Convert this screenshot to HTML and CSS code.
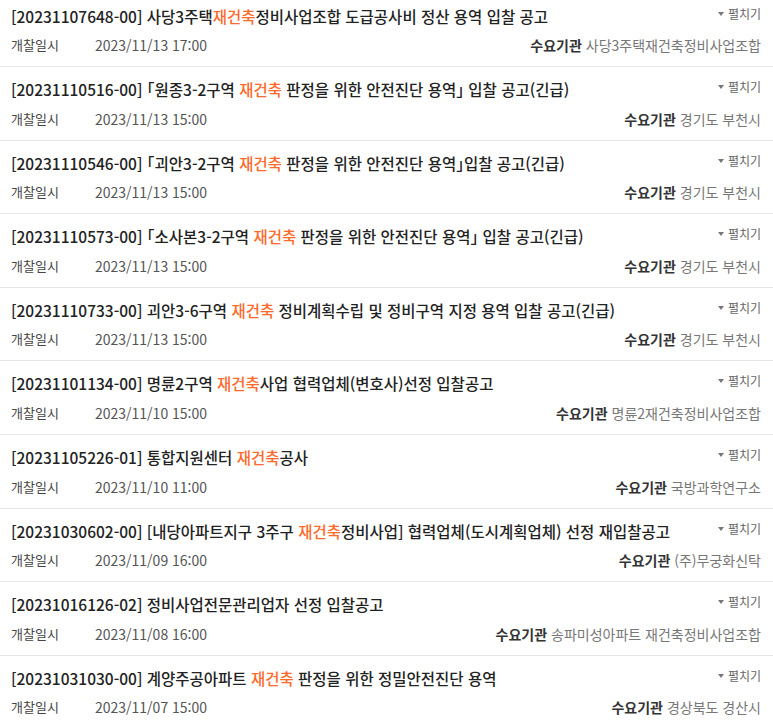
FILE: index.html
```html
<!DOCTYPE html>
<html lang="ko">
<head>
<meta charset="utf-8">
<title>입찰 공고</title>
<link rel="stylesheet" href="styles.css">
</head>
<body>
<ul class="list">
  <li class="item">
    <div class="head"><p class="title">[20231107648-00] 사당3주택<em>재건축</em>정비사업조합 도급공사비 정산 용역 입찰 공고</p><span class="toggle"><i class="tri"></i>펼치기</span></div>
    <div class="meta"><span class="label">개찰일시</span><span class="date">2023/11/13 17:00</span><span class="org"><b>수요기관</b> 사당3주택재건축정비사업조합</span></div>
  </li>
  <li class="item">
    <div class="head"><p class="title">[20231110516-00] <span class="br">「</span>원종3-2구역 <em>재건축</em> 판정을 위한 안전진단 용역<span class="br">」</span> 입찰 공고(긴급)</p><span class="toggle"><i class="tri"></i>펼치기</span></div>
    <div class="meta"><span class="label">개찰일시</span><span class="date">2023/11/13 15:00</span><span class="org"><b>수요기관</b> 경기도 부천시</span></div>
  </li>
  <li class="item">
    <div class="head"><p class="title">[20231110546-00] <span class="br">「</span>괴안3-2구역 <em>재건축</em> 판정을 위한 안전진단 용역<span class="br">」</span>입찰 공고(긴급)</p><span class="toggle"><i class="tri"></i>펼치기</span></div>
    <div class="meta"><span class="label">개찰일시</span><span class="date">2023/11/13 15:00</span><span class="org"><b>수요기관</b> 경기도 부천시</span></div>
  </li>
  <li class="item">
    <div class="head"><p class="title">[20231110573-00] <span class="br">「</span>소사본3-2구역 <em>재건축</em> 판정을 위한 안전진단 용역<span class="br">」</span> 입찰 공고(긴급)</p><span class="toggle"><i class="tri"></i>펼치기</span></div>
    <div class="meta"><span class="label">개찰일시</span><span class="date">2023/11/13 15:00</span><span class="org"><b>수요기관</b> 경기도 부천시</span></div>
  </li>
  <li class="item">
    <div class="head"><p class="title">[20231110733-00] 괴안3-6구역 <em>재건축</em> 정비계획수립 및 정비구역 지정 용역 입찰 공고(긴급)</p><span class="toggle"><i class="tri"></i>펼치기</span></div>
    <div class="meta"><span class="label">개찰일시</span><span class="date">2023/11/13 15:00</span><span class="org"><b>수요기관</b> 경기도 부천시</span></div>
  </li>
  <li class="item">
    <div class="head"><p class="title">[20231101134-00] 명륜2구역 <em>재건축</em>사업 협력업체(변호사)선정 입찰공고</p><span class="toggle"><i class="tri"></i>펼치기</span></div>
    <div class="meta"><span class="label">개찰일시</span><span class="date">2023/11/10 15:00</span><span class="org"><b>수요기관</b> 명륜2재건축정비사업조합</span></div>
  </li>
  <li class="item">
    <div class="head"><p class="title">[20231105226-01] 통합지원센터 <em>재건축</em>공사</p><span class="toggle"><i class="tri"></i>펼치기</span></div>
    <div class="meta"><span class="label">개찰일시</span><span class="date">2023/11/10 11:00</span><span class="org"><b>수요기관</b> 국방과학연구소</span></div>
  </li>
  <li class="item">
    <div class="head"><p class="title">[20231030602-00] [내당아파트지구 3주구 <em>재건축</em>정비사업] 협력업체(도시계획업체) 선정 재입찰공고</p><span class="toggle"><i class="tri"></i>펼치기</span></div>
    <div class="meta"><span class="label">개찰일시</span><span class="date">2023/11/09 16:00</span><span class="org"><b>수요기관</b> (주)무궁화신탁</span></div>
  </li>
  <li class="item">
    <div class="head"><p class="title">[20231016126-02] 정비사업전문관리업자 선정 입찰공고</p><span class="toggle"><i class="tri"></i>펼치기</span></div>
    <div class="meta"><span class="label">개찰일시</span><span class="date">2023/11/08 16:00</span><span class="org"><b>수요기관</b> 송파미성아파트 재건축정비사업조합</span></div>
  </li>
  <li class="item">
    <div class="head"><p class="title">[20231031030-00] 계양주공아파트 <em>재건축</em> 판정을 위한 정밀안전진단 용역</p><span class="toggle"><i class="tri"></i>펼치기</span></div>
    <div class="meta"><span class="label">개찰일시</span><span class="date">2023/11/07 15:00</span><span class="org"><b>수요기관</b> 경상북도 경산시</span></div>
  </li>
</ul>
</body>
</html>
```

FILE: styles.css
```css
html, body {
  margin: 0;
  padding: 0;
  background: #fff;
  overflow: hidden;
}
body {
  font-family: "Noto Sans CJK KR", "Noto Sans", sans-serif;
  color: #222;
}
.list {
  list-style: none;
  margin: -6.5px 0 0 0;
  padding: 0;
}
.item {
  padding: 12px 12px 11.1px 11px;
  border-bottom: 1px solid #e6e6e6;
}
.head {
  display: flex;
  align-items: flex-start;
  justify-content: space-between;
  gap: 10px;
  height: 21px;
}
.title {
  margin: 0;
  font-size: 15.5px;
  font-weight: 500;
  line-height: 21px;
  color: #222;
  white-space: nowrap;
}
.title em {
  font-style: normal;
  color: #ff6a2b;
}
.br {
  font-feature-settings: "halt" 1;
}
.toggle {
  display: flex;
  align-items: center;
  gap: 4px;
  font-size: 12px;
  line-height: 16px;
  color: #666;
  white-space: nowrap;
}
.tri {
  width: 0;
  height: 0;
  border-left: 3px solid transparent;
  border-right: 3px solid transparent;
  border-top: 4px solid #777;
}
.meta {
  display: flex;
  align-items: center;
  margin-top: 8.5px;
  height: 20px;
  line-height: 20px;
}
.label {
  width: 84px;
  font-size: 13px;
  color: #444;
}
.date {
  font-size: 14px;
  color: #555;
}
.org {
  margin-left: auto;
  font-size: 14px;
  line-height: 20px;
  color: #777;
  white-space: nowrap;
}
.org b {
  font-size: 14px;
  line-height: 20px;
  color: #333;
  font-weight: 700;
}
```
